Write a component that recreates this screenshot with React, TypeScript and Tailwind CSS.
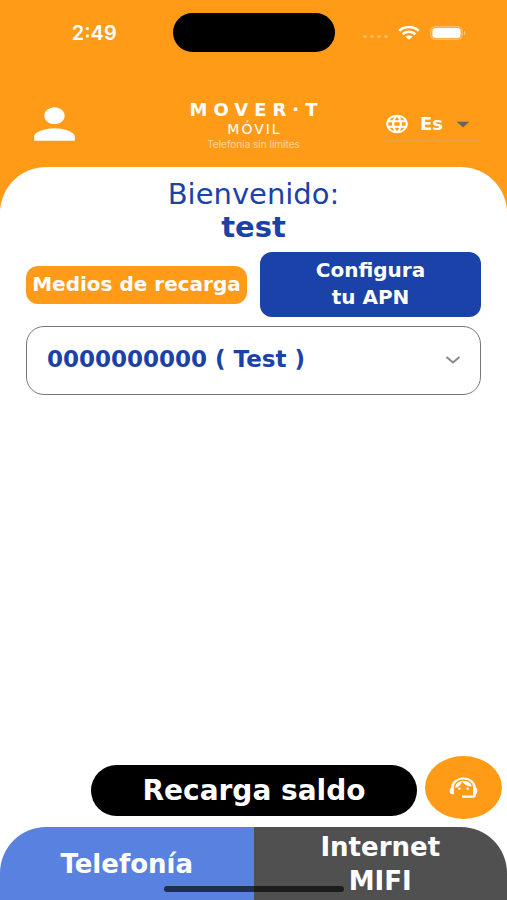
import { useState } from 'react';
import { MdArrowDropDown, MdLanguage, MdPerson, MdSupportAgent } from 'react-icons/md';

function WifiIcon() {
  return (
    <svg aria-hidden="true" viewBox="0 0 22 14" className="h-3.5 w-[22px]" fill="none" stroke="currentColor">
      <path d="M1.2 4.8C6.8-.2 15.2-.2 20.8 4.8" strokeWidth="2.6" />
      <path d="M4.6 8.2C8.3 4.9 13.7 4.9 17.4 8.2" strokeWidth="2.6" />
      <path d="M11 13.8 7.5 10.8c1.8-1.6 5.2-1.6 7 0Z" fill="currentColor" stroke="none" />
    </svg>
  );
}

function BatteryIcon() {
  return (
    <svg aria-hidden="true" viewBox="0 0 36 14" className="h-3.5 w-9">
      <rect x="0.5" y="0.5" width="32" height="13" rx="4.5" fill="#ffffff" fillOpacity="0.2" stroke="#ffffff" strokeOpacity="0.25" />
      <rect x="2.5" y="2" width="28" height="10" rx="3.5" fill="#ffffff" />
      <path d="M34 4.8c1.8.8 1.8 3.6 0 4.4Z" fill="#ffffff" fillOpacity="0.5" />
    </svg>
  );
}

function StatusBar() {
  return (
    <div className="grid h-[52px] grid-cols-[1fr_162px_1fr] items-center pt-[13px] text-white">
      <span className="pl-4 text-center font-['Inter',sans-serif] text-xl leading-5 font-semibold">2:49</span>
      <div className="h-[39px] rounded-full bg-black" />
      <div className="flex items-center justify-center gap-2.5 pr-3">
        <div className="flex gap-[3px] pt-2">
          {[0, 1, 2, 3].map((dot) => (
            <span key={dot} className="h-[3px] w-1 rounded-full bg-white/30" />
          ))}
        </div>
        <WifiIcon />
        <BatteryIcon />
      </div>
    </div>
  );
}

function Header() {
  const [language, setLanguage] = useState('es');
  return (
    <header className="grid h-[115px] grid-cols-[1fr_162px_1fr] pt-[47px] text-white">
      <button type="button" aria-label="Perfil" className="ml-6 h-[50px] w-[61px] justify-self-start">
        <MdPerson preserveAspectRatio="none" className="h-full w-full" />
      </button>
      <div className="flex flex-col items-center whitespace-nowrap">
        <p className="pl-1.5 text-lg leading-[22px] font-bold tracking-[6px]">MOVER·T</p>
        <p className="pl-0.5 text-sm leading-[17px] tracking-[2px]">MÓVIL</p>
        <p className="font-['Inter',sans-serif] text-[10px] leading-3 text-white/55">Telefonia sin límites</p>
      </div>
      <div className="relative mr-[27px] flex h-[42px] w-24 items-center justify-self-end border-b border-[#eda03c] pt-2">
        <label htmlFor="language" aria-label="Idioma">
          <MdLanguage preserveAspectRatio="none" className="h-[22px] w-[26px]" />
        </label>
        <select
          id="language"
          value={language}
          onChange={(event) => setLanguage(event.target.value)}
          className="min-w-0 flex-1 appearance-none bg-transparent pl-2.5 text-lg font-bold text-white outline-none"
        >
          <option value="es">Es</option>
          <option value="en">En</option>
        </select>
        <MdArrowDropDown
          preserveAspectRatio="none"
          className="pointer-events-none absolute right-0.5 h-7 w-[30px] text-[#6b6459]"
        />
      </div>
    </header>
  );
}

function LineSelect() {
  const [line, setLine] = useState('test');
  return (
    <div className="relative mt-[9px]">
      <select
        aria-label="Línea"
        value={line}
        onChange={(event) => setLine(event.target.value)}
        className="h-[69px] w-full appearance-none rounded-[18px] border border-[#777777] bg-white pr-12 pb-0.5 pl-5 text-[23px] font-bold text-[#1a42a8] outline-none"
      >
        <option value="test">0000000000 ( Test )</option>
      </select>
      <svg
        aria-hidden="true"
        viewBox="0 0 16 8"
        className="pointer-events-none absolute top-[30px] right-5 h-2 w-4"
        fill="none"
        stroke="#888888"
        strokeWidth="2"
      >
        <path d="M1.5 1 8 6.5 14.5 1" />
      </svg>
    </div>
  );
}

export default function App() {
  return (
    <div className="flex min-h-screen flex-col bg-[#ff9b17] font-['DejaVu_Sans','Inter',sans-serif]">
      <StatusBar />
      <Header />
      <main className="flex flex-1 flex-col rounded-t-[46px] bg-white pt-[11px]">
        <div className="px-[26px]">
          <h1 className="text-center text-[29px] leading-[33px] text-[#1a42a8]">
            Bienvenido:
            <strong className="block font-bold">test</strong>
          </h1>
          <div className="mt-2 grid grid-cols-2 items-center gap-[13px] text-xl leading-[27px] font-bold text-white">
            <button type="button" className="h-[38px] rounded-xl bg-[#ff9b17] whitespace-nowrap">
              Medios de recarga
            </button>
            <button type="button" className="h-[65px] rounded-xl bg-[#1a42a8] pb-0.5">
              Configura
              <br />
              tu APN
            </button>
          </div>
          <LineSelect />
        </div>
        <div className="mt-auto mb-2 flex items-end gap-2 pr-[5px] pl-[91px]">
          <button type="button" className="mb-[3px] h-[51px] flex-1 rounded-full bg-black text-[28px] font-bold text-white">
            Recarga saldo
          </button>
          <button
            type="button"
            aria-label="Soporte"
            className="flex h-[63px] w-[77px] items-center justify-center rounded-[50%] bg-[#ff9b17] text-white"
          >
            <MdSupportAgent preserveAspectRatio="none" className="h-[27px] w-[33px]" />
          </button>
        </div>
        <nav className="relative grid h-[73px] grid-cols-2 overflow-hidden rounded-t-[46px] text-[26px] leading-[34px] font-bold text-white">
          <button type="button" className="bg-[#5981e0]">
            Telefonía
          </button>
          <button type="button" className="bg-[#505050]">
            Internet
            <br />
            MIFI
          </button>
          <div className="absolute bottom-2 left-1/2 h-1.5 w-[180px] -translate-x-1/2 rounded-full bg-black/65" />
        </nav>
      </main>
    </div>
  );
}
